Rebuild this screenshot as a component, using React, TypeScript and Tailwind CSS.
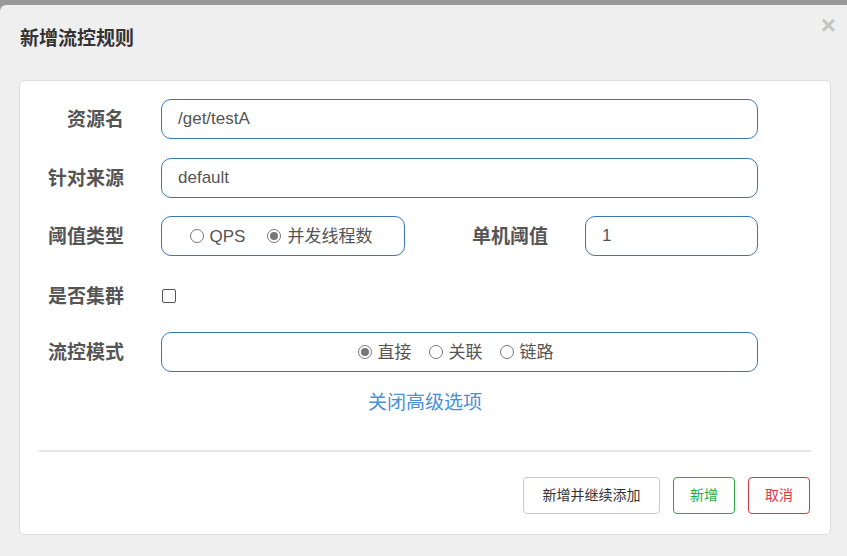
import React from 'react';

const cjk = "font-['Liberation_Sans','Noto_Sans_CJK_SC',sans-serif]";

function Radio({ checked, label }: { checked?: boolean; label: string }) {
  return (
    <span className="flex items-center">
      <span className="w-[14px] h-[14px] rounded-full border border-[#767676] flex items-center justify-center bg-white">
        {checked && <span className="w-[8px] h-[8px] rounded-full bg-[#777]" />}
      </span>
      <span className="ml-[6px] text-[17px] text-[#555] leading-none">{label}</span>
    </span>
  );
}

function Label({ children, className = '' }: { children: React.ReactNode; className?: string }) {
  return (
    <div className={`text-right text-[19px] font-bold text-[#555] leading-none ${className}`}>{children}</div>
  );
}

export default function App() {
  return (
    <div className={`w-[847px] h-[556px] bg-[#999] pt-[5px] overflow-hidden ${cjk}`}>
      <div className="relative h-full bg-[#efefef] rounded-tl-[6px]">
        {/* Header */}
        <div className="h-[75px] pl-[20px] pt-[24px]">
          <h1 className="text-[19px] font-bold text-[#333] leading-[20px]">新增流控规则</h1>
        </div>
        <button className="absolute right-[11px] top-[7px] text-[26px] leading-none font-bold text-[#c4c4c4] font-['Liberation_Sans',sans-serif]">
          ×
        </button>

        {/* Card */}
        <div className="ml-[19px] w-[812px] bg-white border border-[#ddd] rounded-[5px] pt-[18px] pb-[20px]">
          <div className="flex items-center h-[40px]">
            <Label className="w-[104px]">资源名</Label>
            <div className="ml-[37px] w-[597px] h-[40px] border border-[#3a78b5] rounded-[10px] flex items-center px-[16px] text-[17px] text-[#555]">
              /get/testA
            </div>
          </div>

          <div className="flex items-center h-[40px] mt-[19px]">
            <Label className="w-[104px]">针对来源</Label>
            <div className="ml-[37px] w-[597px] h-[40px] border border-[#3a78b5] rounded-[10px] flex items-center px-[16px] text-[17px] text-[#555]">
              default
            </div>
          </div>

          <div className="flex items-center h-[40px] mt-[18px]">
            <Label className="w-[104px]">阈值类型</Label>
            <div className="ml-[37px] w-[244px] h-[40px] border border-[#3a78b5] rounded-[10px] flex items-center justify-center gap-[22px] pr-[4px]">
              <Radio label="QPS" />
              <Radio checked label="并发线程数" />
            </div>
            <Label className="ml-[65px] w-[78px]">单机阈值</Label>
            <div className="ml-[37px] w-[173px] h-[40px] border border-[#3a78b5] rounded-[10px] flex items-center px-[16px] text-[17px] text-[#555]">
              1
            </div>
          </div>

          <div className="flex items-center h-[38px] mt-[21px]">
            <Label className="w-[104px]">是否集群</Label>
            <div className="ml-[38px] w-[14px] h-[14px] border border-[#555] rounded-[2px] bg-white" />
          </div>

          <div className="flex items-center h-[40px] mt-[17px]">
            <Label className="w-[104px]">流控模式</Label>
            <div className="ml-[37px] w-[597px] h-[40px] border border-[#3a78b5] rounded-[10px] flex items-center justify-center gap-[17px] pr-[8px]">
              <Radio checked label="直接" />
              <Radio label="关联" />
              <Radio label="链路" />
            </div>
          </div>

          <div className="mt-[19px] text-center text-[19px] leading-[24px] text-[#4a90d9]">关闭高级选项</div>

          <div className="mx-[19px] mt-[35px] h-[2px] bg-[#e5e5e5]" />

          <div className="mt-[25px] flex justify-end gap-[13px] pr-[20px]">
            <button className="w-[137px] h-[37px] border border-[#ccc] rounded-[4px] text-[14px] text-[#333] bg-white">
              新增并继续添加
            </button>
            <button className="w-[62px] h-[37px] border border-[#28a745] rounded-[4px] text-[14px] text-[#28a745] bg-white">
              新增
            </button>
            <button className="w-[62px] h-[37px] border border-[#dc3545] rounded-[4px] text-[14px] text-[#dc3545] bg-white">
              取消
            </button>
          </div>
        </div>
      </div>
    </div>
  );
}
